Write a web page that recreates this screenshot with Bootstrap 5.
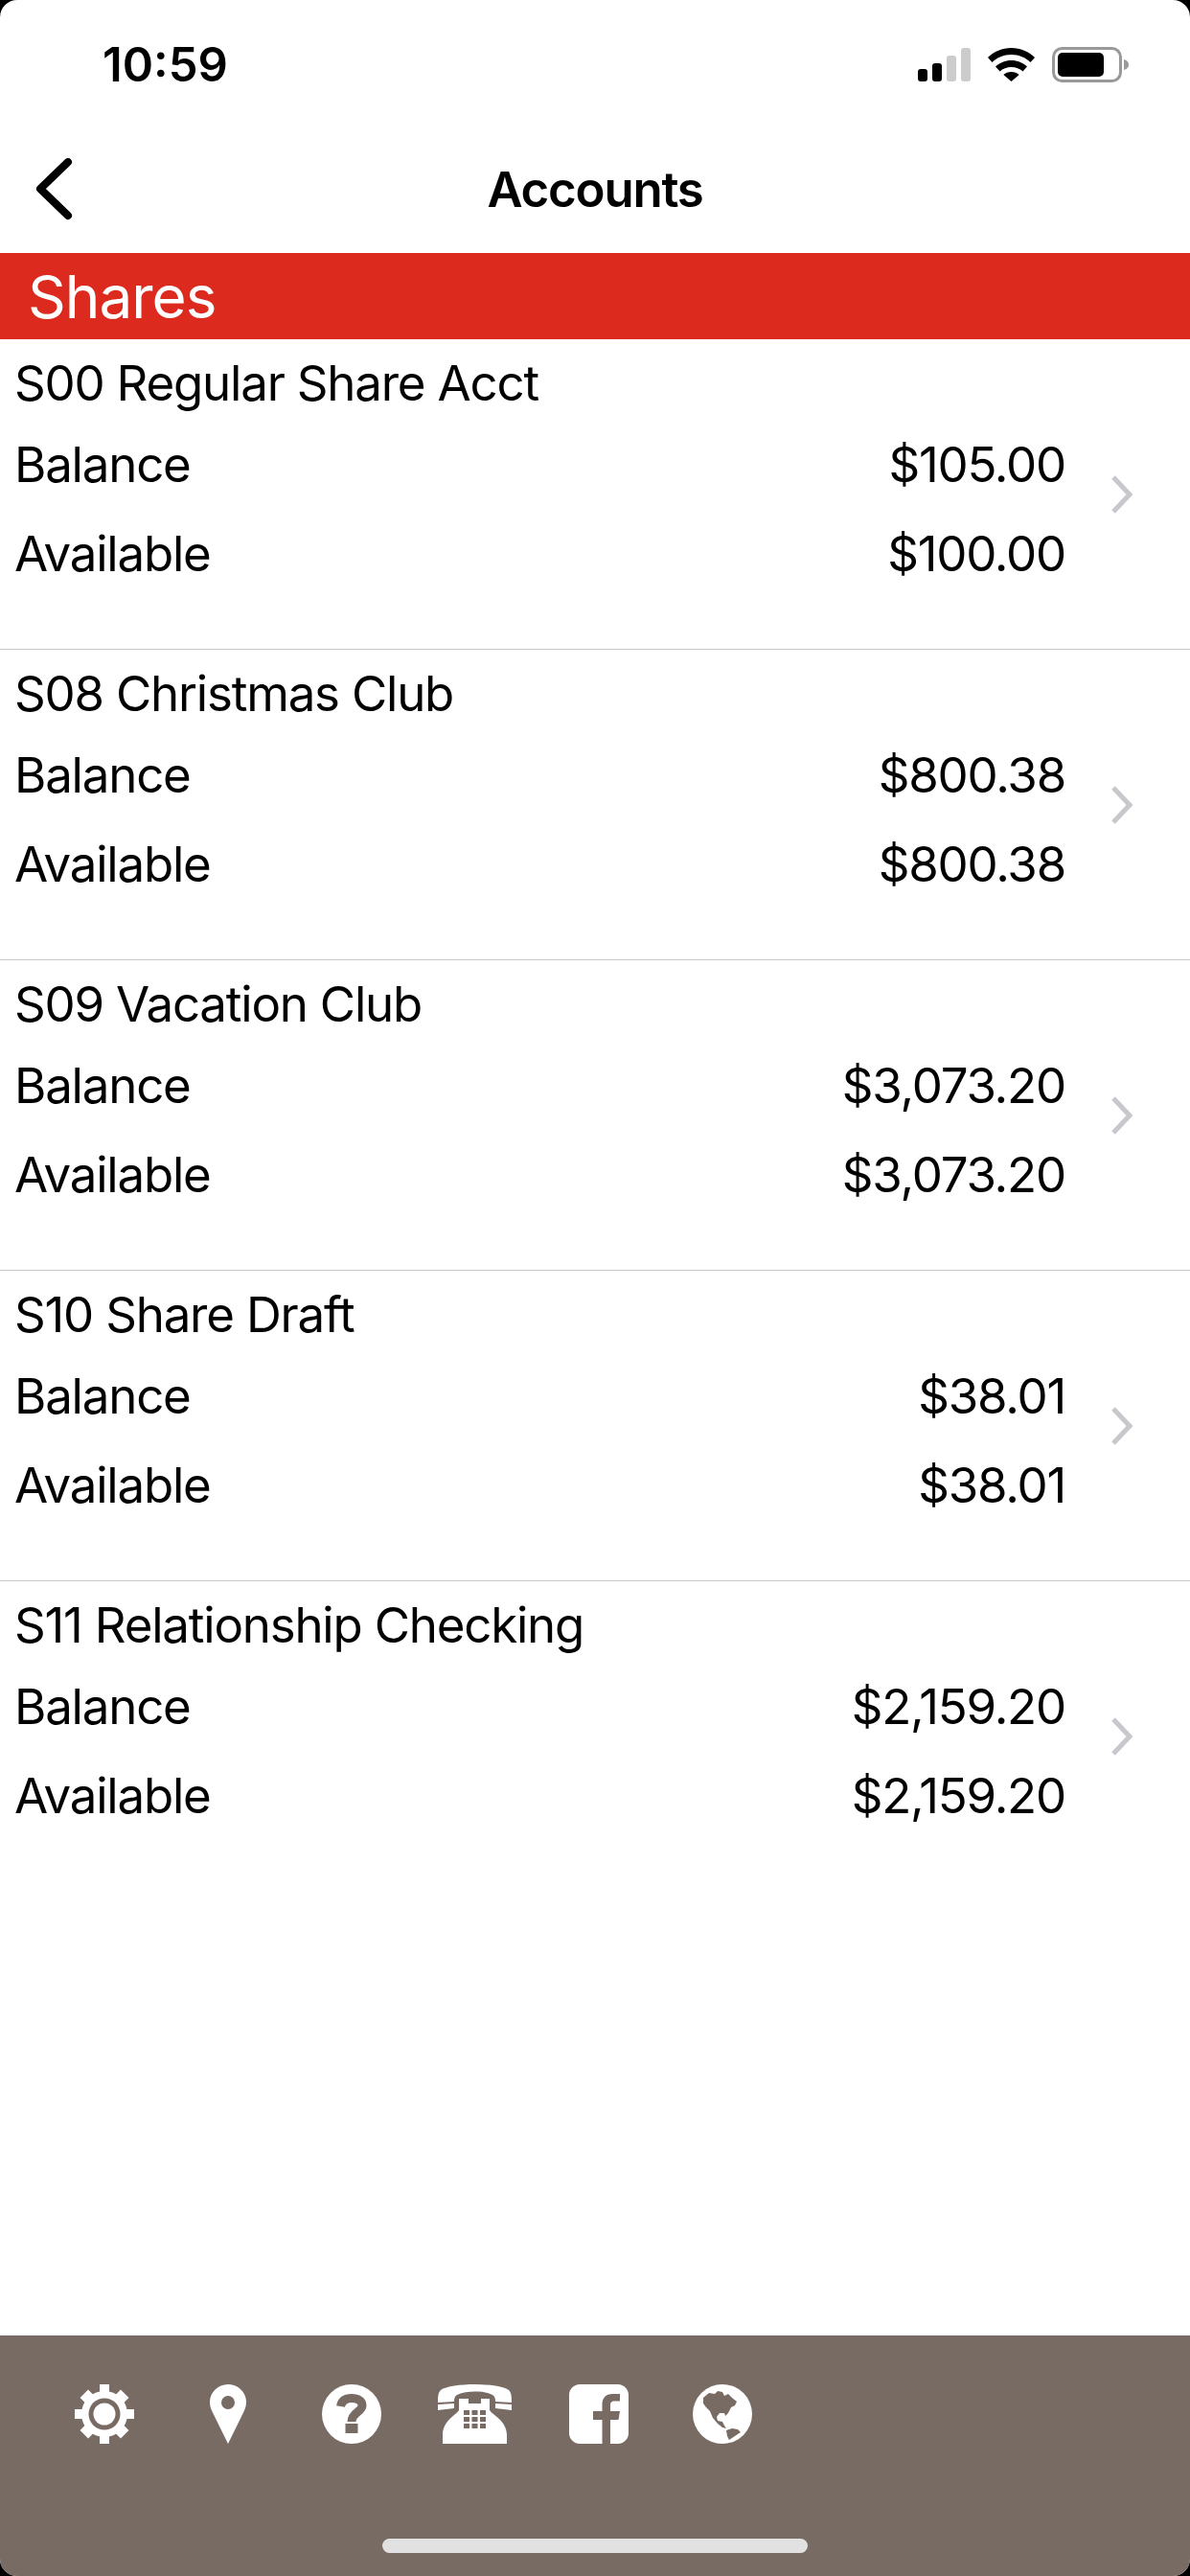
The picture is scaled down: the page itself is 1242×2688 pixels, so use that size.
<!DOCTYPE html>
<html lang="en">
  <head>
    <meta charset="UTF-8" />
    <meta name="viewport" content="width=device-width, initial-scale=1.0" />
    <title>Accounts</title>
    <link href="https://cdn.jsdelivr.net/npm/bootstrap@5.3.3/dist/css/bootstrap.min.css" rel="stylesheet" />
    <style>
      body {
        width: 1242px;
        height: 2688px;
        overflow: hidden;
        background-color: #000;
        font-family: Inter, "Liberation Sans", Arial, sans-serif;
        color: #000;
      }
      .app-screen {
        height: 2688px;
        background-color: #fff;
        border-radius: 18px;
        overflow: hidden;
      }
      /* status bar */
      .status-bar { height: 132px; padding: 35px 64px 0 107px; }
      .status-time { font-size: 49px; line-height: 66px; font-weight: 600; letter-spacing: 0; }
      .status-icons { gap: 18px; margin-top: 14px; }
      /* header */
      .top-nav { height: 132px; position: relative; }
      .top-nav-title { font-size: 51px; font-weight: 600; line-height: 132px; letter-spacing: -1.2px; }
      .back-link { position: absolute; left: 33px; top: 33px; line-height: 0; }
      .section-band {
        height: 90px;
        background-color: #dc2a1e;
        color: #fff;
        font-size: 62px;
        line-height: 92px;
        letter-spacing: -1px;
        padding-left: 29px;
      }
      /* account rows */
      .acct-row {
        height: 324px;
        padding: 0;
        color: #000;
        border-color: #c8c8c8;
        border-width: 0 0 2px;
      }
      .acct-body { padding: 16px 0 0 15px; font-size: 51px; line-height: 60px; letter-spacing: -1.2px; }
      .acct-line { margin-top: 25px; }
      .acct-line + .acct-line { margin-top: 33px; }
      .acct-chev { margin: 0 60px 0 47px; line-height: 0; }
      /* footer */
      .tool-bar { height: 251px; background-color: #786b64; padding: 51px 0 0 44px; position: relative; }
      .tool-slot { width: 129px; line-height: 0; }
      .home-bar {
        position: absolute;
        left: 399px;
        top: 212px;
        width: 444px;
        height: 15px;
        border-radius: 8px;
        background-color: #e1e1e1;
      }
    </style>
  </head>
  <body>
    <div class="app-screen d-flex flex-column">

      <!--status bar-->
      <div class="status-bar d-flex justify-content-between align-items-start">
        <div class="status-time">10:59</div>
        <div class="status-icons d-flex align-items-center">
          <svg width="55" height="35" viewBox="0 0 55 35">
            <rect x="0" y="22" width="10" height="13" rx="3" fill="#000" />
            <rect x="15" y="16" width="10" height="19" rx="3" fill="#000" />
            <rect x="30" y="8" width="10" height="27" rx="3" fill="#ccc" />
            <rect x="45" y="0" width="10" height="35" rx="3" fill="#ccc" />
          </svg>
          <svg width="49" height="35" viewBox="0 0 49 35">
            <path d="M24.5 0C15 0 6.500 3.800 0 10l4.500 5C9.500 10.200 16.500 7 24.500 7s15 3.200 20 8L49 10C42.500 3.800 34 0 24.500 0z" fill="#000" />
            <path d="M24.500 13c-6.500 0-12 2.500-16.500 6.500l4.500 5c3.200-2.900 7.300-4.500 12-4.500s8.800 1.600 12 4.500l4.500-5C36.500 15.500 31 13 24.500 13z" fill="#000" />
            <path d="M24.500 25c-3.300 0-6 1.100-8.200 3l8.200 7 8.200-7c-2.200-1.900-4.900-3-8.200-3z" fill="#000" />
          </svg>
          <svg width="80" height="37" viewBox="0 0 80 37">
            <rect x="1.500" y="1.500" width="70" height="34" rx="9" fill="none" stroke="#999" stroke-width="3" />
            <rect x="6" y="6" width="48" height="25" rx="5" fill="#000" />
            <path d="M75 13c3 .8 5 2.800 5 5.500s-2 4.700-5 5.500z" fill="#999" />
          </svg>
        </div>
      </div>

      <!--header-->
      <div class="top-nav text-center">
        <a class="back-link" href="#" aria-label="Back">
          <svg width="46" height="68" viewBox="0 0 46 68">
            <path d="M38 4 L9 32 L38 60" fill="none" stroke="#000" stroke-width="8" stroke-linecap="round" stroke-linejoin="round" />
          </svg>
        </a>
        <div class="top-nav-title">Accounts</div>
      </div>

      <div class="section-band">Shares</div>

      <!--account list-->
      <div id="acct-list" class="list-group list-group-flush flex-grow-1"></div>

      <!--footer-->
      <div class="tool-bar d-flex align-items-start">
        <div class="tool-slot text-center">
          <svg width="62" height="62" viewBox="0 0 62 62" fill="#fff">
            <rect x="26" y="0" width="10" height="62" />
            <rect x="0" y="26" width="62" height="10" />
            <rect x="25" y="1" width="12" height="60" transform="rotate(45 31 31)" />
            <rect x="25" y="1" width="12" height="60" transform="rotate(-45 31 31)" />
            <circle cx="31" cy="31" r="24" />
            <circle cx="31" cy="31" r="16.500" fill="#786b64" />
            <circle cx="31" cy="31" r="11.500" />
          </svg>
        </div>
        <div class="tool-slot text-center">
          <svg width="38" height="62" viewBox="0 0 38 62">
            <path fill="#fff" fill-rule="evenodd" d="M19 0C8.500 0 0 8.300 0 18.500c0 4 1.200 7.500 3 11L19 62l16-32.500c1.800-3.500 3-7 3-11C38 8.300 29.500 0 19 0zm0 12a7 7 0 1 1 0 14 7 7 0 0 1 0-14z" />
          </svg>
        </div>
        <div class="tool-slot text-center">
          <svg width="62" height="62" viewBox="0 0 62 62">
            <circle cx="31" cy="31" r="31" fill="#fff" />
            <path fill="none" stroke="#786b64" stroke-width="9" d="M19.500 23c1-5.500 5-8.500 11.500-8.500 6.500 0 11 3 11 7.500 0 7-11 7-11 17" />
            <rect x="24.500" y="41" width="13" height="10" fill="#786b64" />
          </svg>
        </div>
        <div class="tool-slot text-center">
          <svg width="77" height="62" viewBox="0 0 77 62" fill="#fff">
            <path d="M38.500 0C24 0 8 2 3 6 0 9 0 14 0 19l17-1c0-4 1-6 3-7 6-3 12-3.500 18.500-3.500S51 8 57 11c2 1 3 3 3 7l17 1c0-5 0-10-3-13C69 2 53 0 38.500 0z" />
            <path d="M0 21l17-1v5L0 27z M77 21l-17-1v5l17 2z" />
            <path d="M22 15h10v5h13v-5h9v12c3 5 18 11 18 26v9H5v-9c0-15 14-21 17-26z" />
            <g fill="#786b64">
              <rect x="27" y="27" width="6" height="5" /><rect x="35.500" y="27" width="6" height="5" /><rect x="44" y="27" width="6" height="5" />
              <rect x="27" y="34" width="6" height="5" /><rect x="35.500" y="34" width="6" height="5" /><rect x="44" y="34" width="6" height="5" />
              <rect x="27" y="41" width="6" height="5" /><rect x="35.500" y="41" width="6" height="5" /><rect x="44" y="41" width="6" height="5" />
            </g>
          </svg>
        </div>
        <div class="tool-slot text-center">
          <svg width="62" height="62" viewBox="0 0 62 62">
            <path fill="#fff" d="M11 0h40c6 0 11 5 11 11v40c0 6-5 11-11 11H43V37h8.500L53 28H43v-6c0-3 1-4.500 4.500-4.500H53V10C51.500 10 48.500 10 45.500 10 38 10 34.500 14.500 34.500 21v7H25v9h9.500V62H11C5 62 0 57 0 51V11C0 5 5 0 11 0z" />
          </svg>
        </div>
        <div class="tool-slot text-center">
          <svg width="62" height="62" viewBox="0 0 62 62">
            <circle cx="31" cy="31" r="31" fill="#fff" />
            <path fill="#786b64" d="M11 14L17 9L23 10L26 7L31 8L33 12L37 10L41 14L46 18L44 22L40 24L37 30L34 33L33 30L28 30L25 34L26 38L31 39L33 43L35 46L31 45L26 41L21 35L18 28L14 24L11 20z" />
            <path fill="#786b64" d="M35 48L41 46L47 47L50 50L44 54L38 58L36 54z" />
          </svg>
        </div>
        <div class="home-bar"></div>
      </div>
    </div>

    <script src="https://cdn.jsdelivr.net/npm/bootstrap@5.3.3/dist/js/bootstrap.bundle.min.js"></script>
    <script>
      const accounts = [
        { name: "S00 Regular Share Acct", balance: "$105.00", available: "$100.00" },
        { name: "S08 Christmas Club", balance: "$800.38", available: "$800.38" },
        { name: "S09 Vacation Club", balance: "$3,073.20", available: "$3,073.20" },
        { name: "S10 Share Draft", balance: "$38.01", available: "$38.01" },
        { name: "S11 Relationship Checking", balance: "$2,159.20", available: "$2,159.20" },
      ];

      document.getElementById("acct-list").innerHTML = accounts.map((a) => `
        <div class="list-group-item acct-row d-flex align-items-center flex-grow-0">
          <div class="acct-body flex-grow-1 align-self-start">
            <div>${a.name}</div>
            <div class="acct-line d-flex justify-content-between"><span>Balance</span><span>${a.balance}</span></div>
            <div class="acct-line d-flex justify-content-between"><span>Available</span><span>${a.available}</span></div>
          </div>
          <div class="acct-chev">
            <svg width="23" height="40" viewBox="0 0 23 40">
              <path d="M3 2 L20 20 L3 38" fill="none" stroke="#c7c7cc" stroke-width="5" />
            </svg>
          </div>
        </div>`).join("");
    </script>
  </body>
</html>
